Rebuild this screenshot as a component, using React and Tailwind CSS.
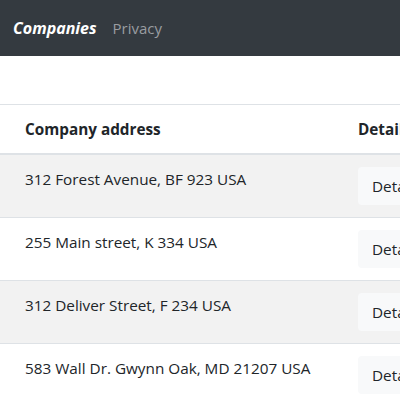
import React from "react";

const companies = [
  "312 Forest Avenue, BF 923 USA",
  "255 Main street, K 334 USA",
  "312 Deliver Street, F 234 USA",
  "583 Wall Dr. Gwynn Oak, MD 21207 USA",
];

const App = () => {
  return (
    <div
      className="w-[400px] h-[407px] overflow-hidden bg-white text-[#212529]"
      style={{ fontFamily: '"Open Sans", "Noto Sans", sans-serif' }}
    >
      <nav className="h-[56px] bg-[#343a40] flex items-center gap-4 px-[13px]">
        <span className="text-white font-bold italic text-[16px]">Companies</span>
        <span className="text-[#9a9da0] text-[15px]">Privacy</span>
      </nav>

      <div className="mt-[48px]">
        <table className="w-[520px] border-collapse text-[15.3px]">
          <thead>
            <tr className="border-t border-[#dee2e6] border-b-2">
              <th className="w-[346px] text-left font-bold pl-[25px] pr-3 py-3 leading-6">
                Company address
              </th>
              <th className="text-left font-bold px-3 py-3 leading-6">Details</th>
            </tr>
          </thead>
          <tbody>
            {companies.map((c, i) => (
              <tr
                key={c}
                className={`border-t border-[#dee2e6] ${i % 2 === 0 ? "bg-[#f2f2f2]" : "bg-white"}`}
              >
                <td className="align-top pl-[25px] pr-3 py-3 leading-6">{c}</td>
                <td className="align-top px-3 py-3">
                  <button className="h-[38px] px-[14px] rounded bg-[#f8f9fa] text-[#212529]">
                    Details
                  </button>
                </td>
              </tr>
            ))}
          </tbody>
        </table>
      </div>
    </div>
  );
};

export default App;
